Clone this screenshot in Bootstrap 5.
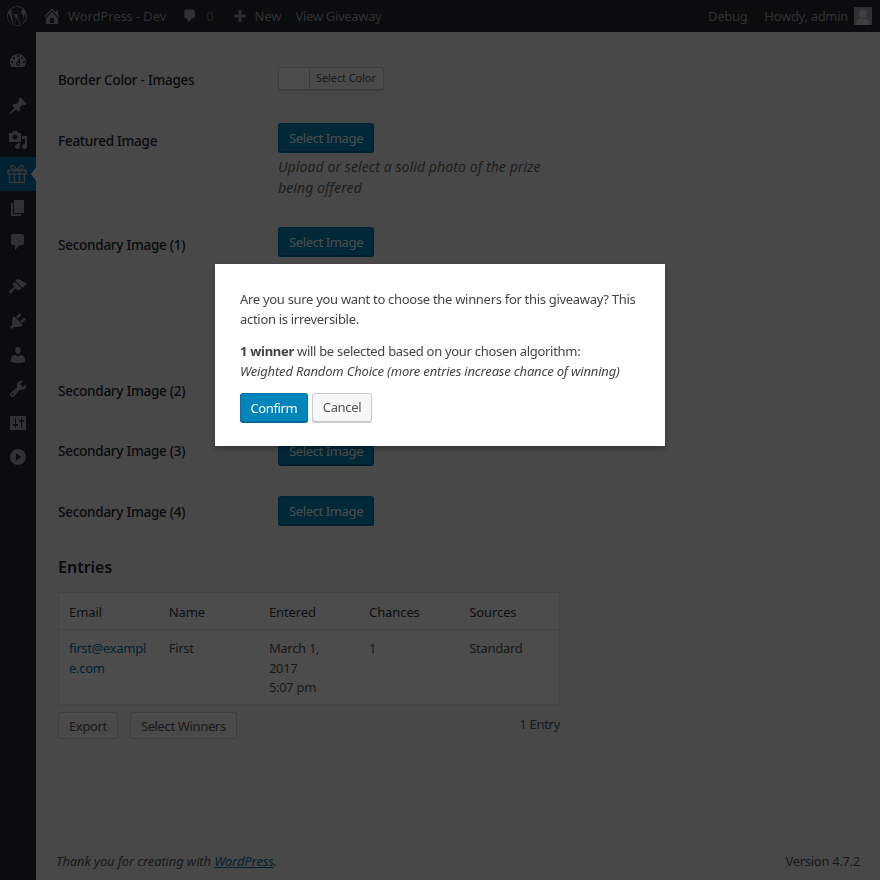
<!DOCTYPE html>
<html lang="en">
<head>
<meta charset="utf-8">
<title>Giveaway</title>
<link href="https://cdn.jsdelivr.net/npm/bootstrap@5.3.0/dist/css/bootstrap.min.css" rel="stylesheet">
<style>
html,body{height:880px;overflow:hidden}
body{font-family:"Noto Sans","Open Sans",sans-serif;font-size:13px;line-height:1.4;color:#444;background:#f1f1f1;letter-spacing:-.1px}
.wpbar{height:32px;background:#23282d;color:#eee;font-size:13px;padding:0 8px 0 7px}
.wpbar svg{fill:#a0a5aa;display:block}
.bar-muted{color:#a0a5aa}
.bar-tight{letter-spacing:-.3px}
.wpava{width:18px;height:18px;background:#a0a5aa;overflow:hidden}
.wpava svg{fill:#d8d8d8}
.shell{height:848px}
.sidemenu{width:36px;background:#23282d;padding-top:12px;flex:none}
.sideitem{height:34px;position:relative}
.sideitem svg{fill:#9ea3a8;display:block}
.sideitem.on{background:#0073aa}
.sideitem.on::after{content:"";position:absolute;right:0;top:10px;border:7px solid transparent;border-left:0;border-right:5px solid #f1f1f1}
.sidesep{height:11px}
.mainwrap{padding:35px 20px 0 22px;min-width:0}
.fld{display:flex}
.fld-label{width:220px;flex:none;font-size:13.5px;font-weight:500;color:#23282d;letter-spacing:-.25px}
.h56{height:56px}.h104{height:104px}.h146{height:146px}.h63{height:63px}.h60{height:60px}
.off4{padding-top:4px}.off9{padding-top:9px}.off6{padding-top:6px}.off7{padding-top:7px}
.btn-wp{background:#0085ba;border:1px solid #0073aa;border-bottom-color:#006799;color:#fff;font-size:13px;line-height:26px;height:29px;padding:0 10px;border-radius:3px;box-shadow:0 1px 0 #006799;letter-spacing:-.38px}
.btn-wp:hover{background:#0085ba;color:#fff;border-color:#0073aa}
.btn-lite{background:#f7f7f7;border:1px solid #ccc;color:#555;font-size:13px;line-height:25px;height:27px;padding:1px 10px 0;border-radius:3px;letter-spacing:-.36px}
.colorpick{height:23px;width:106px;border:1px solid #ccc;border-radius:3px;background:#f7f7f7;box-shadow:0 1px 0 #ccc;overflow:hidden;font-size:11px;color:#555}
.colorpick i{display:block;width:31px;height:100%;background:#fff;border-right:1px solid #ccc}
.colorpick span{padding-left:6px;line-height:20px}
.fld-note{font-style:italic;font-size:14px;line-height:21px;color:#666;width:280px;margin:4px 0 0;letter-spacing:.09px}
.entries-h{font-size:16px;font-weight:600;color:#23282d;margin:0 0 14px;line-height:22px;letter-spacing:0}
.tbl-wrap{width:502px}
.tbl-wrap .table{table-layout:fixed;background:#fff;border:1px solid #e5e5e5;margin:0;width:502px;--bs-table-bg:#fff;font-size:13px;color:#444}
.tbl-wrap th{font-weight:400;font-size:13px;padding:9px 10px 7px;line-height:20px;border-bottom:1px solid #e1e1e1;color:#32373c}
.tbl-wrap td{padding:9px 10px 6px;line-height:19.6px;border:0;color:#555;letter-spacing:-.3px}
.mail-cell{word-break:break-all}
.tbl-wrap a{color:#0073aa;text-decoration:none}
.tbl-wrap col{width:100px}
.tbl-foot{margin-top:7px}
.tbl-foot .cnt{color:#555;margin-top:3px;letter-spacing:-.3px}
.pagefoot{margin-top:auto;padding:0 0 10px;margin-left:-2px;font-size:13px;color:#555;letter-spacing:-.13px}
.pagefoot span{letter-spacing:-.3px}
.pagefoot a{color:#0073aa}
.veil{position:fixed;inset:0;background:rgba(0,0,0,.7);z-index:10}
.dlg{position:fixed;left:215px;top:264px;width:450px;height:182px;background:#fff;padding:25px;z-index:11;box-shadow:0 3px 6px rgba(0,0,0,.3);color:#444;line-height:20px;letter-spacing:-.3px}
.dlg p{margin:0 0 12px}
.dlg em{letter-spacing:-.17px}
.dlg .btn-wp{padding:0 9.500px}
.dlg .btn-lite{height:29px;line-height:27px;padding:0 10px;box-shadow:0 1px 0 #ccc}
.ic-home{margin-left:15px}
.tx-site{margin-left:6px}
</style>
</head>
<body>
<header class="wpbar d-flex justify-content-between align-items-center">
  <div class="d-flex align-items-center">
    <svg width="20" height="20" viewBox="0 0 20 20"><path fill-rule="evenodd" d="M10 0a10 10 0 1 0 0 20 10 10 0 0 0 0-20zm0 1a9 9 0 0 1 6.100 2.400c-1.200 0-2 1-2 2.100 0 1 .6 1.800 1.200 2.800.5.800 1 1.900 1 3.400 0 1.100-.4 2.300-1 4l-1.200 4-.2.100-3.600-10.900c.6 0 1.200-.1 1.200-.1.500-.1.500-.9 0-.8 0 0-1.600.1-2.600.1-1 0-2.600-.1-2.600-.1-.5 0-.6.800 0 .8 0 0 .5.100 1 .1l1.600 4.300-2.200 6.600L4.300 5.700c.6 0 1.200-.1 1.200-.1.500-.1.500-.9 0-.8 0 0-1.500.1-2.500.1A9 9 0 0 1 10 1zM1.800 7.100l4.400 12A9 9 0 0 1 1.800 7.100zm8.300 3.900 2.800 7.700a9 9 0 0 1-5.500.1zm7.700-4.600a9 9 0 0 1-3.400 12l2.700-7.900c.5-1.300.7-2.300.7-3.200 0-.3 0-.6 0-.9z"/></svg>
    <svg class="ic-home" width="20" height="20" viewBox="0 0 20 20"><path d="M16 8.500l1.530 1.530-1.060 1.060L10 4.620l-6.470 6.470-1.060-1.060L10 2.500l4 4v-2h2v4zm-6-2.460l6 5.990V18H4v-5.970zM12 17v-5H8v5h4z"/></svg>
    <span class="bar-muted tx-site">WordPress - Dev</span>
    <svg style="margin-left:16px" width="16" height="16" viewBox="0 0 20 20"><path d="M5 2h9c1.100 0 2 .9 2 2v7c0 1.100-.9 2-2 2h-2l-5 5v-5H5c-1.100 0-2-.9-2-2V4c0-1.100.9-2 2-2z"/></svg>
    <span class="bar-muted" style="margin-left:8px;opacity:.55">0</span>
    <svg style="margin-left:17px" width="18" height="18" viewBox="0 0 20 20"><path d="M17 7v3h-5v5H9v-5H4V7h5V2h3v5h5z" transform="translate(-.5 1.500)"/></svg>
    <span class="bar-muted" style="margin-left:6px">New</span>
    <span class="bar-muted bar-tight" style="margin-left:14px">View Giveaway</span>
  </div>
  <div class="d-flex align-items-center">
    <span class="bar-muted bar-tight" style="margin-right:1px">Debug</span>
    <span class="bar-muted bar-tight" style="margin-left:16px">Howdy, admin</span>
    <div class="wpava" style="margin-left:6px"><svg width="18" height="18" viewBox="0 0 18 18"><circle cx="9" cy="7" r="4"/><ellipse cx="9" cy="17" rx="7" ry="5.500"/></svg></div>
  </div>
</header>
<div class="shell d-flex">
  <nav class="sidemenu">
    <div class="sideitem d-flex align-items-center justify-content-center"><svg width="20" height="20" viewBox="0 0 20 20"><path fill-rule="evenodd" d="M3.760 16h12.480c1.100-1.370 1.760-3.110 1.760-5 0-4.420-3.580-8-8-8s-8 3.580-8 8c0 1.890.66 3.630 1.760 5zM10 4c.55 0 1 .45 1 1s-.45 1-1 1-1-.45-1-1 .45-1 1-1zM6 6c.55 0 1 .45 1 1s-.45 1-1 1-1-.45-1-1 .45-1 1-1zm8 0c.55 0 1 .45 1 1s-.45 1-1 1-1-.45-1-1 .45-1 1-1zm-5.370 5.550L12 7v6c0 1.100-.9 2-2 2s-2-.9-2-2c0-.57.24-1.080.63-1.450zM4 10c.55 0 1 .45 1 1s-.45 1-1 1-1-.45-1-1 .45-1 1-1zm12 0c.55 0 1 .45 1 1s-.45 1-1 1-1-.45-1-1 .45-1 1-1zm-5 3c0-.55-.45-1-1-1s-1 .45-1 1 .45 1 1 1 1-.45 1-1z"/></svg></div>
    <div class="sidesep"></div>
    <div class="sideitem d-flex align-items-center justify-content-center"><svg width="20" height="20" viewBox="0 0 20 20"><path d="M10.440 3.020l1.820-1.820 6.360 6.350-1.830 1.820c-1.050-.68-2.480-.57-3.410.36l-.75.75c-.92.93-1.040 2.350-.35 3.410l-1.830 1.820-2.410-2.410-2.800 2.790c-.42.42-3.380 2.710-3.800 2.290s1.860-3.390 2.280-3.810l2.790-2.790L4.100 9.360l1.830-1.820c1.050.69 2.480.57 3.400-.36l.75-.75c.93-.92 1.050-2.350.36-3.410z"/></svg></div>
    <div class="sideitem d-flex align-items-center justify-content-center"><svg width="20" height="20" viewBox="0 0 20 20"><path fill-rule="evenodd" d="M13 11V4c0-.55-.45-1-1-1h-1.670L9 1H5L3.670 3H2c-.55 0-1 .45-1 1v7c0 .55.45 1 1 1h10c.55 0 1-.45 1-1zM7 4.500c1.380 0 2.500 1.120 2.500 2.500S8.380 9.500 7 9.500 4.500 8.380 4.500 7 5.620 4.500 7 4.500zM14 6h5v10.500c0 1.380-1.120 2.500-2.500 2.500S14 17.880 14 16.500s1.120-2.500 2.500-2.500c.17 0 .34.02.5.05V9h-3V6zm-4 8.050V13h2v3.500c0 1.380-1.120 2.500-2.500 2.500S7 17.880 7 16.500 8.120 14 9.500 14c.17 0 .34.02.5.05z"/></svg></div>
    <div class="sideitem on d-flex align-items-center" style="padding-left:7px"><svg width="20" height="20" viewBox="0 0 20 20" style="fill:none;stroke:#b4b9be;stroke-width:1.400"><path d="M1 6.500h18v3.500H1zM2.500 10v8.500h15V10M7.500 6.500v12M12.500 6.500v12M10 6.500C8 3 6 1 4.500 1.500S4 6 10 6.500zM10 6.500c2-3.500 4-5.500 5.500-5S16 6 10 6.500z"/></svg></div>
    <div class="sideitem d-flex align-items-center justify-content-center"><svg width="20" height="20" viewBox="0 0 20 20"><path d="M6 15V2h10v13H6zm-1 1h8v2H3V5h2v11z"/></svg></div>
    <div class="sideitem d-flex align-items-center justify-content-center"><svg width="20" height="20" viewBox="0 0 20 20"><path d="M5 2h9c1.100 0 2 .9 2 2v7c0 1.100-.9 2-2 2h-2l-5 5v-5H5c-1.100 0-2-.9-2-2V4c0-1.100.9-2 2-2z"/></svg></div>
    <div class="sidesep"></div>
    <div class="sideitem d-flex align-items-center justify-content-center"><svg width="20" height="20" viewBox="0 0 20 20"><path d="M14.480 11.060L7.410 3.990l1.500-1.500c.5-.56 2.300-.47 3.510.32 1.210.8 1.430 1.280 2.910 2.100 1.180.64 2.450 1.260 4.450.85zm-.71.710L6.700 4.700 4.930 6.470c-.39.39-.39 1.020 0 1.410l1.060 1.060c.39.39.39 1.030 0 1.420-.6.6-1.430 1.110-2.210 1.690-.35.26-.7.53-1.010.84C1.430 13.230.28 15.030 1 16s2.740-.43 3.090-.78c.31-.31.58-.66.84-1.010.58-.78 1.090-1.610 1.690-2.210.39-.39 1.020-.39 1.410 0l1.060 1.060c.39.39 1.020.39 1.410 0z"/></svg></div>
    <div class="sideitem d-flex align-items-center justify-content-center"><svg width="20" height="20" viewBox="0 0 20 20"><path d="M13.110 4.360L9.870 7.600 8 5.730l3.240-3.240c.35-.34 1.050-.2 1.560.32.52.51.66 1.210.31 1.550zm-8 1.770l.91-1.120 9.010 9.010-1.190.84c-.71.71-2.630 1.160-3.820 1.160H6.140L4.900 17.260c-.59.59-1.540.59-2.120 0-.59-.58-.59-1.530 0-2.120l1.240-1.240v-3.880c0-1.130.4-3.190 1.090-3.890zm7.260 3.970l3.240-3.240c.34-.35 1.040-.21 1.550.31.52.51.66 1.210.31 1.550l-3.240 3.250z"/></svg></div>
    <div class="sideitem d-flex align-items-center justify-content-center"><svg width="20" height="20" viewBox="0 0 20 20"><path d="M10 9.250c-2.270 0-2.730-3.440-2.730-3.440C7 4.020 7.820 2 9.970 2c2.160 0 2.980 2.020 2.710 3.810 0 0-.41 3.440-2.680 3.440zm0 2.570L12.720 10c2.390 0 4.520 2.330 4.520 4.530v2.490s-3.650 1.130-7.240 1.130c-3.650 0-7.240-1.130-7.240-1.130v-2.490c0-2.250 1.940-4.480 4.470-4.480z"/></svg></div>
    <div class="sideitem d-flex align-items-center justify-content-center"><svg width="20" height="20" viewBox="0 0 20 20"><path fill-rule="evenodd" d="M16.680 9.770c-1.340 1.340-3.300 1.670-4.950.99l-5.410 6.520c-.99.99-2.590.99-3.580 0s-.99-2.590 0-3.570l6.520-5.420c-.68-1.650-.35-3.610.99-4.950 1.280-1.280 3.120-1.620 4.720-1.060l-2.890 2.890 2.820 2.820 2.860-2.870c.53 1.580.18 3.390-1.080 4.650zM3.810 16.210c.4.39 1.040.39 1.430 0 .4-.4.4-1.040 0-1.430-.39-.4-1.030-.4-1.430 0-.39.39-.39 1.030 0 1.430z"/></svg></div>
    <div class="sideitem d-flex align-items-center justify-content-center"><svg width="20" height="20" viewBox="0 0 20 20"><path fill-rule="evenodd" d="M18 16V4c0-.55-.45-1-1-1H3c-.55 0-1 .45-1 1v12c0 .55.45 1 1 1h14c.55 0 1-.45 1-1zM8 11h1c.55 0 1 .45 1 1s-.45 1-1 1H8v1.500c0 .28-.22.5-.5.5s-.5-.22-.5-.5V13H6c-.55 0-1-.45-1-1s.45-1 1-1h1V5.500c0-.28.22-.5.5-.5s.5.22.5.5V11zm5-2h-1c-.55 0-1-.45-1-1s.45-1 1-1h1V5.500c0-.28.22-.5.5-.5s.5.22.5.5V7h1c.55 0 1 .45 1 1s-.45 1-1 1h-1v5.500c0 .28-.22.5-.5.5s-.5-.22-.5-.5V9z"/></svg></div>
    <div class="sideitem d-flex align-items-center justify-content-center"><svg width="18" height="18" viewBox="0 0 18 18"><path fill-rule="evenodd" d="M9 1a8 8 0 1 0 0 16A8 8 0 0 0 9 1zM7 5.500l5.500 3.500L7 12.500z"/></svg></div>
  </nav>
  <main class="mainwrap flex-grow-1 d-flex flex-column">
    <div class="fld h56"><div class="fld-label off4">Border Color - Images</div><div><div class="colorpick d-flex"><i></i><span>Select Color</span></div></div></div>
    <div class="fld h104"><div class="fld-label off9">Featured Image</div><div><button class="btn btn-wp">Select Image</button><p class="fld-note">Upload or select a solid photo of the prize being offered</p></div></div>
    <div class="fld h146"><div class="fld-label off9">Secondary Image (1)</div><div><button class="btn btn-wp">Select Image</button></div></div>
    <div class="fld h63"><div class="fld-label off9">Secondary Image (2)</div><div><button class="btn btn-wp">Select Image</button></div></div>
    <div class="fld h60"><div class="fld-label off6">Secondary Image (3)</div><div><button class="btn btn-wp">Select Image</button></div></div>
    <div class="fld h60"><div class="fld-label off7">Secondary Image (4)</div><div><button class="btn btn-wp">Select Image</button></div></div>
    <h2 class="entries-h">Entries</h2>
    <div class="tbl-wrap">
      <table class="table">
        <colgroup><col><col><col><col><col></colgroup>
        <thead><tr><th>Email</th><th>Name</th><th>Entered</th><th>Chances</th><th>Sources</th></tr></thead>
        <tbody><tr><td class="mail-cell"><a href="#">first@example.com</a></td><td>First</td><td>March 1, 2017<br>5:07 pm</td><td>1</td><td>Standard</td></tr></tbody>
      </table>
      <div class="tbl-foot d-flex justify-content-between align-items-start">
        <div class="d-flex" style="gap:12px"><button class="btn btn-lite">Export</button><button class="btn btn-lite">Select Winners</button></div>
        <div class="cnt">1 Entry</div>
      </div>
    </div>
    <footer class="pagefoot d-flex justify-content-between">
      <em>Thank you for creating with <a href="#">WordPress</a>.</em>
      <span>Version 4.7.2</span>
    </footer>
  </main>
</div>
<div class="veil"></div>
<div class="dlg" role="dialog">
  <p>Are you sure you want to choose the winners for this giveaway? This action is irreversible.</p>
  <p><strong>1 winner</strong> will be selected based on your chosen algorithm:<br><em>Weighted Random Choice (more entries increase chance of winning)</em></p>
  <div class="d-flex" style="gap:4px"><button class="btn btn-wp">Confirm</button><button class="btn btn-lite">Cancel</button></div>
</div>
<script src="https://cdn.jsdelivr.net/npm/bootstrap@5.3.0/dist/js/bootstrap.bundle.min.js"></script>
</body>
</html>
